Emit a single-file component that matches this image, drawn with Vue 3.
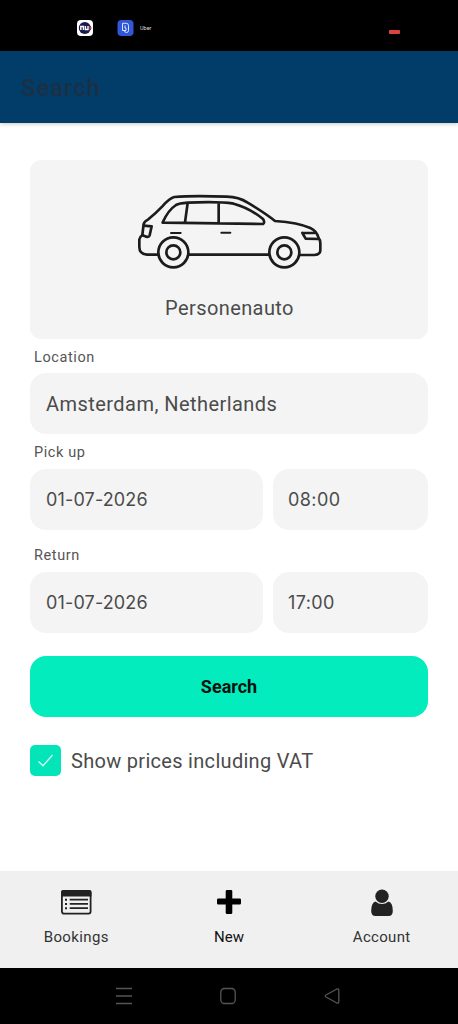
<script setup>
const periods = [
  { id: 'pickup', label: 'Pick up', date: '01-07-2026', time: '08:00' },
  { id: 'return', label: 'Return', date: '01-07-2026', time: '17:00' },
]
</script>

<template>
  <div class="screen">
    <div class="status">
      <svg class="app-one" viewBox="0 0 16 16">
        <rect width="16" height="16" rx="4" fill="#fff" />
        <circle cx="7.800" cy="8" r="6" fill="#171b50" />
        <path d="M2 6h12v4H2z" fill="#171b50" />
        <path d="M12.500 5.500l2.500 2.500-2.500 2.500z" fill="#b94b4b" />
        <path d="M3.800 10V6.500h2.600V10M8.400 6v3.500H11V6" fill="none" stroke="#fff" stroke-width="1.400" />
      </svg>
      <svg class="app-two" viewBox="0 0 16 16">
        <rect width="16" height="16" rx="4" fill="#3157d8" />
        <path d="M5 10.500V3.300h3.800q2.200 0 2.200 2.200v5q0 2-2 2t-2-1.800M5 10.500h3.500V8H7.500V5.500" fill="none" stroke="#dce6ff" stroke-width="1" />
      </svg>
      <span class="carrier">Uber</span>
      <i class="battery"></i>
    </div>

    <header class="header"><h1>Search</h1></header>

    <main class="content">
      <section class="vehicle">
        <svg class="car" viewBox="30 30 570 246" fill="none" stroke="#1c1c1c" stroke-width="8" stroke-linejoin="round" stroke-linecap="round">
          <path d="M101 224H66Q43 222 43 201V178Q44 171 52 165L56 132Q58 124 70 118Q92 100 112 79Q134 54 148 51Q205 46 305 50Q342 51 368 68Q420 99 450 123Q520 128 556 144Q575 153 581 174Q587 180 586 196V211Q585 224 568 225H524M190 224H433" />
          <path d="M113 127Q130 90 153 75Q162 70 188 68Q282 64 326 71Q374 84 414 117Q421 128 414 132Q260 130 117 128Q112 128 113 127ZM188 69L180 127M281 68V130M56 137L80 139L74 166Q72 172 64 170L53 166" />
          <path d="M532 159L542 176L580 177M532 159H568" />
          <path d="M138 159H167M289 158H316" stroke-width="6" />
          <circle cx="145" cy="217" r="45" /><circle cx="145" cy="217" r="21" />
          <circle cx="478" cy="217" r="45" /><circle cx="478" cy="217" r="21" />
        </svg>
        <span class="vehicle-name">Personenauto</span>
      </section>

      <label class="label location-label">Location</label>
      <div class="field location">Amsterdam, Netherlands</div>

      <section v-for="p in periods" :key="p.id" :class="['period', p.id]">
        <label class="label">{{ p.label }}</label>
        <div class="row">
          <div class="field date">{{ p.date }}</div>
          <div class="field time">{{ p.time }}</div>
        </div>
      </section>

      <button class="submit">Search</button>

      <div class="vat">
        <span class="check">
          <svg viewBox="0 0 31 31"><path d="M8.500 16.500l4.500 4.300L22.500 10" fill="none" stroke="#d9fff5" stroke-width="1.300" /></svg>
        </span>
        <span class="vat-text">Show prices including VAT</span>
      </div>
    </main>

    <nav class="tabs">
      <div class="tab">
        <svg width="32" height="28" viewBox="0 0 32 28">
          <rect x="1.900" y="3" width="28.700" height="22.600" rx="2" fill="none" stroke="#222" stroke-width="1.800" />
          <path d="M1 8.500V4q0-2 2-2h26.500q2 0 2 2v4.500z" fill="#222" />
          <path d="M9.700 11.700H28M9.700 15.900H28M9.700 20.200H28" stroke="#222" stroke-width="1.800" />
          <path d="M5 11.700h2M5 15.900h2M5 20.200h2" stroke="#222" stroke-width="2" />
        </svg>
        <span class="t-bookings">Bookings</span>
      </div>
      <div class="tab active">
        <svg width="26" height="28" viewBox="0 0 26 28">
          <path d="M11 2h4q1.300 0 1.300 1.300V10.500H23.700Q25 10.500 25 11.800V15.300Q25 16.600 23.700 16.600H16.300V24.700Q16.300 26 15 26H11Q9.700 26 9.700 24.700V16.600H2.300Q1 16.600 1 15.300V11.800Q1 10.500 2.300 10.500H9.700V3.300Q9.700 2 11 2Z" fill="#000" />
        </svg>
        <span class="t-new">New</span>
      </div>
      <div class="tab">
        <svg width="24" height="28" viewBox="0 0 24 28">
          <path d="M5.500 13.500Q8.500 16 12 16T18.500 13.500Q22.800 14.500 22.800 23Q22.800 28 18.500 28H5.500Q1.200 28 1.200 23Q1.200 14.500 5.500 13.500Z" fill="#222" />
          <circle cx="12" cy="8.300" r="6.700" fill="#222" />
        </svg>
        <span class="t-account">Account</span>
      </div>
    </nav>

    <div class="system">
      <svg viewBox="0 0 16 18"><path d="M0 1.500H16M0 9H16M0 16.500H16" /></svg>
      <svg viewBox="0 0 16 18"><rect x=".8" y="1.500" width="14.400" height="15" rx="3.500" /></svg>
      <svg viewBox="0 0 16 18"><path d="M14.800 3.500V14.500Q14.800 17 12.500 15.800L2 10Q.4 9 2 8L12.500 2.200Q14.800 1 14.800 3.500Z" /></svg>
    </div>
  </div>
</template>

<style>
body { margin: 0; background: #fff; }
</style>

<style scoped>
* { box-sizing: border-box; }
.screen { width: 458px; height: 1024px; display: flex; flex-direction: column; background: #fff; color: #4b4b4b; font-family: Roboto, sans-serif; overflow: hidden; }
svg { display: block; flex: none; }
.status { height: 51px; flex: none; background: #000; display: flex; align-items: center; padding: 4px 58px 0 77px; }
.app-one, .app-two { width: 16px; height: 16px; }
.app-two { margin-left: 24px; width: 17px; }
.carrier { margin-left: 6px; color: #ddd; font-size: 5.500px; line-height: 8px; }
.battery { width: 11px; height: 4px; margin: 8px 0 0 auto; border-radius: 1px; background: #dc453f; }
.header { height: 72px; flex: none; background: #023d69; box-shadow: 0 1px 4px rgba(0,0,0,.22); display: flex; align-items: center; padding: 2px 21px 0; }
h1 { margin: 0; font-size: 24px; line-height: 30px; font-weight: 500; letter-spacing: .9px; color: #1b3044; }
.content { flex: 1; padding: 37px 30px 0; display: flex; flex-direction: column; }
.vehicle { height: 179px; flex: none; background: #f4f4f4; border-radius: 11px; display: flex; flex-direction: column; align-items: center; padding: 30px 0 0 1px; }
.car { width: 190px; height: 82px; }
.vehicle-name { margin-top: 23px; font-size: 20px; line-height: 26px; letter-spacing: .4px; white-space: nowrap; }
.label { display: block; height: 18px; padding-left: 4px; font-size: 14.500px; line-height: 18px; letter-spacing: .6px; color: #555; }
.location-label { margin-top: 10px; }
.field { height: 61px; flex: none; display: flex; align-items: center; padding: 1px 16px 0; background: #f4f4f4; border-radius: 16px; font-size: 20px; letter-spacing: .45px; white-space: nowrap; }
.location { margin-top: 6px; }
.pickup { margin-top: 10px; }
.return { margin-top: 17px; }
.row { display: grid; grid-template-columns: 233px 155px; gap: 10px; margin-top: 7px; }
.date, .time { font-family: Inter, sans-serif; font-size: 18px; letter-spacing: .15px; padding-top: 0; }
.time { padding-left: 15px; letter-spacing: .4px; }
.submit { margin-top: 23px; height: 61px; flex: none; border: 0; border-radius: 16px; background: #03ecbd; color: #06120f; font: 700 18px/24px Roboto, sans-serif; padding: 1px 0 0; }
.vat { margin-top: 28px; display: flex; align-items: center; }
.check { width: 31px; height: 31px; border-radius: 5px; background: #03e4b8; }
.vat-text { margin-left: 10px; font-size: 20px; line-height: 26px; letter-spacing: .3px; white-space: nowrap; }
.tabs { height: 97px; flex: none; display: grid; grid-template-columns: repeat(3, 1fr); background: #f0f0f0; padding-top: 17px; }
.tab { display: flex; flex-direction: column; align-items: center; color: #333; font-size: 15px; line-height: 20px; letter-spacing: .4px; }
.tab span { margin-top: 11px; }
.tab .t-new { letter-spacing: 0; }
.tab .t-account { letter-spacing: .3px; }
.active { color: #111; }
.system { height: 56px; flex: none; background: #000; display: flex; justify-content: center; align-items: center; gap: 88px; padding-right: 2px; }
.system svg { width: 16px; height: 18px; fill: none; stroke: #555; stroke-width: 1.300; }
</style>
